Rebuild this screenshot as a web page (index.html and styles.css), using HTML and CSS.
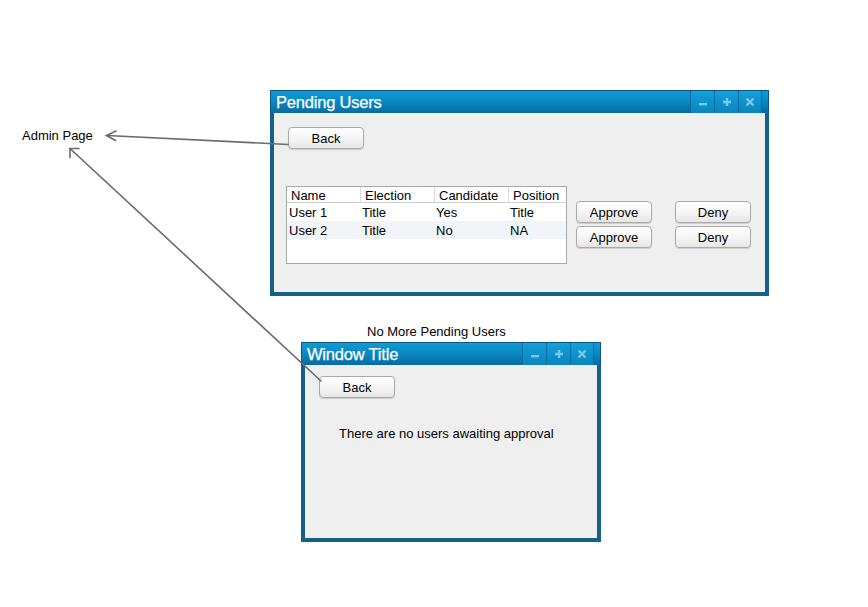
FILE: index.html
```html
<!DOCTYPE html>
<html>
<head>
<meta charset="utf-8">
<link rel="stylesheet" href="styles.css">
</head>
<body>
<div class="canvas">
  <svg class="arrows" width="868" height="607" viewBox="0 0 868 607">
    <g stroke="#6a6a6a" stroke-width="1.6" fill="none" stroke-linecap="round">
      <line x1="288" y1="144.5" x2="107" y2="135.5"/>
      <polyline points="116,131 106.5,135.5 115.5,140.5"/>
      <line x1="321" y1="381" x2="70" y2="148.5"/>
      <polyline points="70,157.5 70,148.5 79,148.5"/>
    </g>
  </svg>

  <div class="label label-admin">Admin Page</div>
  <div class="label label-nomore">No More Pending Users</div>

  <div class="window win-pending">
    <div class="titlebar">
      <span class="title">Pending Users</span>
      <div class="tbtns">
        <span class="tbtn"><svg width="10" height="10" viewBox="0 0 10 10"><rect x="1" y="6" width="8" height="2.4" fill="#7fc6e6"/></svg></span>
        <span class="tbtn"><svg width="10" height="10" viewBox="0 0 10 10"><path d="M3.8 1h2.4v2.8H9v2.4H6.2V9H3.8V6.2H1V3.8h2.8z" fill="#7fc6e6"/></svg></span>
        <span class="tbtn"><svg width="10" height="10" viewBox="0 0 10 10"><path d="M1.5 1.5L8.5 8.5M8.5 1.5L1.5 8.5" stroke="#7fc6e6" stroke-width="2.4"/></svg></span>
      </div>
    </div>
    <div class="body body-pending">
      <button class="btn">Back</button>
      <div class="row-area">
        <div class="table">
          <div class="trow thead">
            <span class="c1">Name</span><span class="c2">Election</span><span class="c3">Candidate</span><span class="c4">Position</span>
          </div>
          <div class="trow">
            <span class="c1">User 1</span><span class="c2">Title</span><span class="c3">Yes</span><span class="c4">Title</span>
          </div>
          <div class="trow alt">
            <span class="c1">User 2</span><span class="c2">Title</span><span class="c3">No</span><span class="c4">NA</span>
          </div>
        </div>
        <div class="actions">
          <div class="action-pair"><button class="btn">Approve</button><button class="btn">Deny</button></div>
          <div class="action-pair"><button class="btn">Approve</button><button class="btn">Deny</button></div>
        </div>
      </div>
    </div>
  </div>

  <div class="window win-empty">
    <div class="titlebar">
      <span class="title">Window Title</span>
      <div class="tbtns">
        <span class="tbtn"><svg width="10" height="10" viewBox="0 0 10 10"><rect x="1" y="6" width="8" height="2.4" fill="#7fc6e6"/></svg></span>
        <span class="tbtn"><svg width="10" height="10" viewBox="0 0 10 10"><path d="M3.8 1h2.4v2.8H9v2.4H6.2V9H3.8V6.2H1V3.8h2.8z" fill="#7fc6e6"/></svg></span>
        <span class="tbtn"><svg width="10" height="10" viewBox="0 0 10 10"><path d="M1.5 1.5L8.5 8.5M8.5 1.5L1.5 8.5" stroke="#7fc6e6" stroke-width="2.4"/></svg></span>
      </div>
    </div>
    <div class="body body-empty">
      <button class="btn">Back</button>
      <p class="message">There are no users awaiting approval</p>
    </div>
  </div>
</div>
</body>
</html>
```

FILE: styles.css
```css
* { box-sizing: border-box; }
html, body { margin: 0; padding: 0; background: #fff; }
body { font-family: "Liberation Sans", Arial, Helvetica, sans-serif; font-size: 13px; color: #000; }

.canvas { position: relative; width: 868px; height: 607px; overflow: hidden; }

.arrows { position: absolute; left: 0; top: 0; z-index: 5; pointer-events: none; }

.label { position: absolute; font-size: 13px; line-height: 16px; }
.label-admin { left: 22px; top: 128px; }
.label-nomore { left: 367px; top: 324px; }

.window {
  position: absolute;
  display: flex;
  flex-direction: column;
  background: #14628a;
  padding: 0 4px 4px;
}
.win-pending { left: 270px; top: 90px; width: 499px; height: 206px; }
.win-empty { left: 301px; top: 342px; width: 300px; height: 200px; }

.titlebar {
  margin: 0 -4px;
  height: 23px;
  flex: none;
  display: flex;
  align-items: center;
  justify-content: space-between;
  background: linear-gradient(#0f9ad6 0%, #0a89c4 45%, #086b9e 100%);
  border-top: 1px solid #0c5a82;
  border-left: 1px solid #0c5a82;
  border-right: 1px solid #0c5a82;
  padding-left: 5px;
  padding-right: 6px;
}
.title { color: #fff; font-size: 16.5px; line-height: 20px; letter-spacing: -0.2px; -webkit-text-stroke: 0.25px #fff; }
.tbtns { display: flex; height: 100%; }
.tbtn {
  width: 24px;
  height: 100%;
  display: flex;
  align-items: center;
  justify-content: center;
  background: linear-gradient(#12a0dc, #0a84bd);
  border-left: 1px solid #0b6a99;
}
.tbtn:last-child { border-right: 1px solid #0b6a99; }
.tbtn svg { display: block; }

.body { flex: 1; background: #efefef; position: relative; }
.body-pending { padding: 14px 0 0 14px; }
.body-empty { padding: 11px 0 0 14px; }

.btn {
  display: block;
  width: 76px;
  height: 22px;
  padding: 0;
  font-family: inherit;
  font-size: 13px;
  color: #000;
  background: linear-gradient(#ffffff, #f3f3f3 60%, #e6e6e6);
  border: 1px solid #a9a9a9;
  border-radius: 4px;
  box-shadow: 0 1px 1px rgba(0,0,0,0.15);
}

.row-area { display: flex; margin-top: 37px; margin-left: -2px; }

.table {
  width: 281px;
  height: 78px;
  background: #fff;
  border: 1px solid #a8a8a8;
}
.trow { display: flex; height: 18px; align-items: stretch; }
.trow span { padding-left: 2px; line-height: 18px; padding-top: 1px; }
.thead { height: 16px; border-bottom: 1px solid #cfcfcf; }
.thead span { padding: 1px 0 0 4px; line-height: 16px; height: 15px; overflow: visible; }
.thead span + span { border-left: 1px solid #dadada; padding-left: 4px; }
.alt { background: #f1f4f9; }
.c1 { width: 73px; }
.c2 { width: 74px; }
.c3 { width: 74px; }
.c4 { flex: 1; }

.actions { display: flex; flex-direction: column; gap: 3px; margin-left: 9px; margin-top: 15px; }
.action-pair { display: flex; gap: 23px; }

.message { margin: 28px 0 0 20px; font-size: 13px; line-height: 16px; }
```
